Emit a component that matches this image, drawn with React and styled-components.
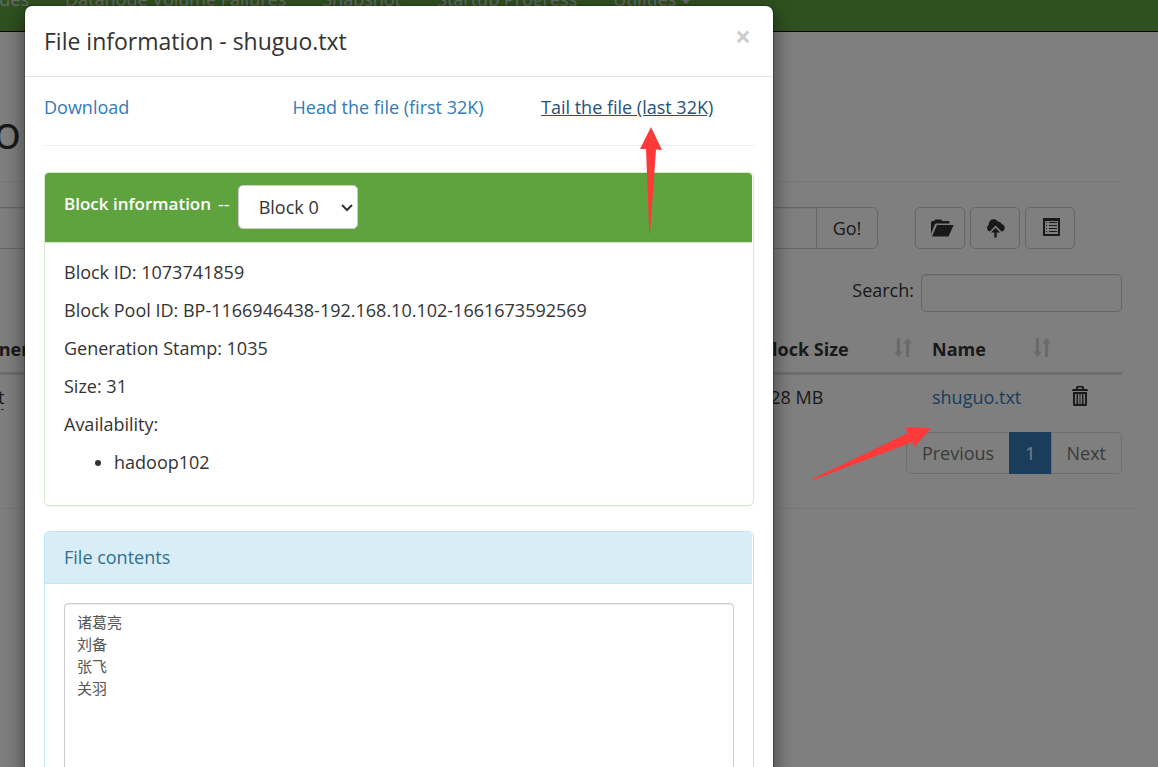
import React from "react";
import styled, { createGlobalStyle } from "styled-components";

const GlobalStyle = createGlobalStyle`
  *, *::before, *::after { box-sizing: border-box; }
  html, body { margin: 0; padding: 0; background: #fff; }
  body, button, input, select, textarea {
    font-family: "Open Sans", "Noto Sans", "Noto Sans CJK SC", sans-serif;
    font-size: 18px;
    line-height: 26px;
    color: #333;
  }
  a { color: #337ab7; text-decoration: none; }
  p, h1, h2, h3, ul { margin: 0; font-weight: 400; }
`;

const Viewport = styled.div`
  position: relative;
  height: 100vh;
  overflow: hidden;
`;

/* The explorer page sits scrolled a little down and to the right. */
const Page = styled.div`
  margin: -35px 0 0 -342px;
`;

const Navbar = styled.nav`
  display: flex;
  align-items: flex-start;
  height: 67px;
  padding: 21px 18px 0 262px;
  background: #5fa33e;
  border-bottom: 1px solid #000;
`;

const NavLink = styled.a`
  padding: 0 18px;
  color: #d0d3cf;
  white-space: nowrap;
`;

const Caret = styled.span`
  display: inline-block;
  margin-left: 5px;
  vertical-align: middle;
  border-top: 5px solid currentColor;
  border-left: 5px solid transparent;
  border-right: 5px solid transparent;
`;

const Container = styled.main`
  padding: 73px 18px 0;
`;

const Section = styled.div`
  padding: 0 18px;
`;

const PageTitle = styled.h1`
  padding-bottom: 24px;
  border-bottom: 1px solid #eee;
  font-size: 46px;
  line-height: 52px;
`;

const Toolbar = styled.div`
  display: flex;
  gap: 5px;
  margin-top: 25px;
  padding-right: 47px;
`;

const PathGroup = styled.div`
  display: flex;
  flex: 1;
  margin-right: 32px;
`;

const Field = styled.input`
  border: 1px solid #ccc;
  border-radius: 5px;
  padding: 0 12px;
  background: #fff;
  box-shadow: inset 0 1px 1px rgba(0, 0, 0, 0.075);
`;

const PathField = styled(Field)`
  flex: 1;
  min-width: 0;
  height: 42px;
  border-right: 0;
  border-radius: 5px 0 0 5px;
`;

const SearchField = styled(Field)`
  width: 201px;
  height: 38px;
`;

const Button = styled.button`
  display: flex;
  align-items: center;
  justify-content: center;
  width: ${(p) => p.$width || 50}px;
  height: 42px;
  padding: 0;
  border: 1px solid #ccc;
  border-radius: ${(p) => (p.$joined ? "0 5px 5px 0" : "5px")};
  background: #fff;
`;

const SearchRow = styled.div`
  display: flex;
  justify-content: flex-end;
  gap: 7px;
  margin-top: 25px;
  line-height: 32px;
`;

const FileTable = styled.table`
  width: 100%;
  margin-top: 13px;
  table-layout: fixed;
  border-collapse: separate;
  border-spacing: 0;
  text-align: left;

  th {
    padding: 11px 9px 10px 11px;
    border-bottom: 3px solid #ddd;
    font-weight: 700;
  }
  td {
    padding: 9px 11px;
  }
  th:first-child,
  td:first-child {
    padding: 0;
  }
`;

const Col = styled.col`
  width: ${(p) => (p.$width ? `${p.$width}px` : "auto")};
`;

const HeadCell = styled.div`
  display: flex;
  justify-content: space-between;
  white-space: nowrap;

  svg { margin-top: 2px; }
`;

const Editable = styled.a`
  color: #333;
  border-bottom: 1px dashed #0088cc;
`;

const IconButton = styled.button`
  display: flex;
  padding: 0;
  border: 0;
  background: none;
`;

const Pagination = styled.nav`
  display: flex;
  justify-content: flex-end;
  margin-top: 13px;
`;

const PageLink = styled.a`
  padding: 7px 15px;
  border: 1px solid ${(p) => (p.$active ? "#337ab7" : "#ddd")};
  margin-left: -1px;
  background: ${(p) => (p.$active ? "#337ab7" : "#fff")};
  color: ${(p) => (p.$active ? "#fff" : "#777")};

  &:first-child { border-radius: 5px 0 0 5px; }
  &:last-child { border-radius: 0 5px 5px 0; }
`;

const Rule = styled.hr`
  height: 1px;
  margin: ${(p) => p.$space || "0"};
  border: 0;
  background: #eee;
`;

const Backdrop = styled.div`
  position: absolute;
  inset: 0;
  padding: 5px 24px 0;
  overflow: hidden;
  background: rgba(0, 0, 0, 0.5);
`;

const Dialog = styled.section`
  max-width: 750px;
  border: 1px solid rgba(0, 0, 0, 0.2);
  border-radius: 8px;
  background: #fff;
  background-clip: padding-box;
  box-shadow: 0 7px 20px rgba(0, 0, 0, 0.5);
`;

const DialogHeader = styled.header`
  display: flex;
  justify-content: space-between;
  align-items: flex-start;
  padding: 18px 22px 18px 19px;
  border-bottom: 1px solid #e5e5e5;
`;

const DialogTitle = styled.h2`
  font-size: 23px;
  line-height: 34px;
`;

const CloseButton = styled.button`
  padding: 0;
  border: 0;
  background: none;
  color: #000;
  font-size: 28px;
  font-weight: 700;
  line-height: 24px;
  opacity: 0.2;
`;

const DialogBody = styled.div`
  padding: 17px 19px 19px;
`;

const FileLinks = styled.div`
  display: grid;
  grid-template-columns: 35fr 35fr 30fr;
`;

const FileLink = styled.a`
  justify-self: start;
  white-space: nowrap;
  color: ${(p) => (p.$hovered ? "#23527c" : "#337ab7")};
  text-decoration: ${(p) => (p.$hovered ? "underline" : "none")};
`;

const Panel = styled.section`
  margin-bottom: 25px;
  padding-right: 1px;
  border: 1px solid ${(p) => (p.$info ? "#bce8f1" : "#d6e9c6")};
  border-radius: 5px;
  box-shadow: 0 1px 1px rgba(0, 0, 0, 0.05);
`;

const PanelHeading = styled.div`
  display: flex;
  gap: 8px;
  padding: 12px 19px 13px;
  border-bottom: 1px solid ${(p) => (p.$info ? "#bce8f1" : "#d6e9c6")};
  border-radius: 4px 4px 0 0;
  background: ${(p) => (p.$info ? "#d9edf7" : "#5fa33e")};
  color: ${(p) => (p.$info ? "#31708f" : "#fff")};
`;

const BlockLabel = styled.label`
  display: flex;
  gap: 7px;
  line-height: 38px;
  white-space: nowrap;

  b {
    font-size: 17px;
    font-weight: 600;
  }
`;

const SelectBox = styled.div`
  position: relative;

  svg {
    position: absolute;
    right: 5px;
    top: 18px;
    pointer-events: none;
  }
`;

const Select = styled.select`
  display: block;
  width: 120px;
  height: 44px;
  padding: 0 20px;
  border: 1px solid #ccc;
  border-radius: 5px;
  background: #fff;
  appearance: none;
`;

const BlockDetails = styled.div`
  display: flex;
  flex-direction: column;
  gap: 12px;
  padding: 16px 19px 30px;
`;

const NodeList = styled.ul`
  padding-left: 50px;
`;

const ContentsBody = styled.div`
  padding: 19px 18px 19px 19px;
`;

const Contents = styled.textarea`
  display: block;
  width: 100%;
  height: 270px;
  padding: 7px 12px;
  border: 1px solid #ccc;
  border-radius: 4px;
  box-shadow: inset 0 1px 1px rgba(0, 0, 0, 0.075);
  color: #555;
  font-size: 15px;
  line-height: 22px;
  resize: none;
`;

const Annotations = styled.svg`
  position: absolute;
  left: 0;
  top: 0;
  pointer-events: none;
`;

const FolderOpenIcon = () => (
  <svg width="27" height="18" viewBox="-4 0 27 18" fill="#333" aria-hidden="true">
    <path d="M0 15V3.5Q0 2 1.5 2H3L4.5 .5H10L11.5 2H17.5Q18.5 2 18.5 3V4.5H5.2Q4.3 4.5 3.9 5.3Z" />
    <path d="M6 6H22.6L17.6 17.6H1Z" />
  </svg>
);

const CloudUploadIcon = () => (
  <svg width="19" height="19" viewBox="0 0 19 19" fill="#333" aria-hidden="true">
    <path d="M4 12.6A3.7 3.7 0 0 1 2.5 6Q3 0 8 .2Q10.500 .3 11.900 2.400Q15 2.200 15.600 5Q18.700 5.600 18.700 9Q18.500 12.400 15.500 12.600L9.500 6.600L3.900 12.400Z" />
    <path d="M9.500 8.800L14 13.500H10.700V18.500H8.300V13.500H5Z" />
  </svg>
);

const ListIcon = () => (
  <svg width="19" height="20" viewBox="-2 0 19 20" fill="#333" aria-hidden="true">
    <path fillRule="evenodd" d="M0 0H17V18H0ZM2 3V16H15V3Z" />
    <path d="M3 4h1v1h-1zM6 4h8v1h-8zM3 7h1v1h-1zM6 7h8v1h-8zM3 10h1v1h-1zM6 10h8v1h-8zM3 13h1v1h-1zM6 13h8v1h-8z" />
  </svg>
);

const TrashIcon = () => (
  <svg width="18" height="23" viewBox="-1 0 18 23" fill="#333" aria-hidden="true">
    <path fillRule="evenodd" d="M0 5V4L1 3H4V1.500Q4 0 5.500 0H10.500Q12 0 12 1.500V3H15L16 4V5ZM6 3H10V1.500H6Z" />
    <path fillRule="evenodd" d="M1 6H15V18.500Q15 20 13.500 20H2.500Q1 20 1 18.500ZM3 8V18H4.500V8ZM6 8V18H7.500V8ZM8.500 8V18H10V8ZM11.500 8V18H13V8Z" />
  </svg>
);

const SortIcon = () => (
  <svg width="18" height="19" viewBox="0 0 18 19" fill="#333" opacity="0.2" aria-hidden="true">
    <path d="M2.800 0H6V13.500H9L4.400 19L0 13.500H2.800Z" />
    <path d="M12 19H15.200V5.500H18L13.600 0L9 5.500H12Z" />
  </svg>
);

const ChevronIcon = () => (
  <svg width="12" height="9" viewBox="0 0 12 9" fill="none" stroke="#333" strokeWidth="2" aria-hidden="true">
    <path d="M1 2L6 7L11 2" />
  </svg>
);

const names = "诸葛亮\n刘备\n张飞\n关羽";

export default function App() {
  return (
    <Viewport>
      <GlobalStyle />
      <Page>
        <Navbar>
          <NavLink href="#datanodes">Datanodes</NavLink>
          <NavLink href="#failures">Datanode Volume Failures</NavLink>
          <NavLink href="#snapshot">Snapshot</NavLink>
          <NavLink href="#startup">Startup Progress</NavLink>
          <NavLink href="#utilities">
            Utilities
            <Caret />
          </NavLink>
        </Navbar>
        <Container>
          <Section>
            <PageTitle>Browse Directory</PageTitle>
            <Toolbar>
              <PathGroup>
                <PathField aria-label="Directory" />
                <Button $width={62} $joined>Go!</Button>
              </PathGroup>
              <Button aria-label="Create directory"><FolderOpenIcon /></Button>
              <Button aria-label="Upload files"><CloudUploadIcon /></Button>
              <Button aria-label="Cut and paste"><ListIcon /></Button>
            </Toolbar>
            <SearchRow>
              <label htmlFor="search">Search:</label>
              <SearchField id="search" type="search" />
            </SearchRow>
            <FileTable>
              <colgroup>
                <Col $width={264} />
                <Col />
                <Col $width={172} />
                <Col $width={139} />
                <Col $width={62} />
              </colgroup>
              <thead>
                <tr>
                  <th />
                  <th>Owner</th>
                  <th><HeadCell>Block Size<SortIcon /></HeadCell></th>
                  <th><HeadCell>Name<SortIcon /></HeadCell></th>
                  <th />
                </tr>
              </thead>
              <tbody>
                <tr>
                  <td />
                  <td><Editable href="#owner">root</Editable></td>
                  <td>128 MB</td>
                  <td><a href="#shuguo">shuguo.txt</a></td>
                  <td><IconButton aria-label="Delete"><TrashIcon /></IconButton></td>
                </tr>
              </tbody>
            </FileTable>
            <Pagination aria-label="Pages">
              <PageLink href="#previous">Previous</PageLink>
              <PageLink href="#1" $active>1</PageLink>
              <PageLink href="#next">Next</PageLink>
            </Pagination>
          </Section>
          <Rule $space="34px 0 0" />
        </Container>
      </Page>

      <Backdrop>
        <Dialog role="dialog" aria-labelledby="dialog-title">
          <DialogHeader>
            <DialogTitle id="dialog-title">File information - shuguo.txt</DialogTitle>
            <CloseButton aria-label="Close">×</CloseButton>
          </DialogHeader>
          <DialogBody>
            <FileLinks>
              <FileLink href="#download">Download</FileLink>
              <FileLink href="#head">Head the file (first 32K)</FileLink>
              <FileLink href="#tail" $hovered>Tail the file (last 32K)</FileLink>
            </FileLinks>
            <Rule $space="25px 0 26px" />
            <Panel>
              <PanelHeading>
                <BlockLabel htmlFor="block">
                  <b>Block information</b>
                  <span>--</span>
                </BlockLabel>
                <SelectBox>
                  <Select id="block"><option>Block 0</option></Select>
                  <ChevronIcon />
                </SelectBox>
              </PanelHeading>
              <BlockDetails>
                <p>Block ID: 1073741859</p>
                <p>Block Pool ID: BP-1166946438-192.168.10.102-1661673592569</p>
                <p>Generation Stamp: 1035</p>
                <p>Size: 31</p>
                <p>Availability:</p>
                <NodeList><li>hadoop102</li></NodeList>
              </BlockDetails>
            </Panel>
            <Panel $info>
              <PanelHeading $info>
                <label htmlFor="contents">File contents</label>
              </PanelHeading>
              <ContentsBody>
                <Contents id="contents" readOnly value={names} />
              </ContentsBody>
            </Panel>
          </DialogBody>
        </Dialog>
      </Backdrop>

      <Annotations width="960" height="500" viewBox="0 0 960 500" fill="#fd3a39" aria-hidden="true">
        <path d="M651 127L662 150L656 149.500L650 234H649.300L646 149L640 149Z" />
        <path d="M931 428L905 427L908 433L812 479L813 480L912.500 442L914.500 447Z" />
      </Annotations>
    </Viewport>
  );
}
